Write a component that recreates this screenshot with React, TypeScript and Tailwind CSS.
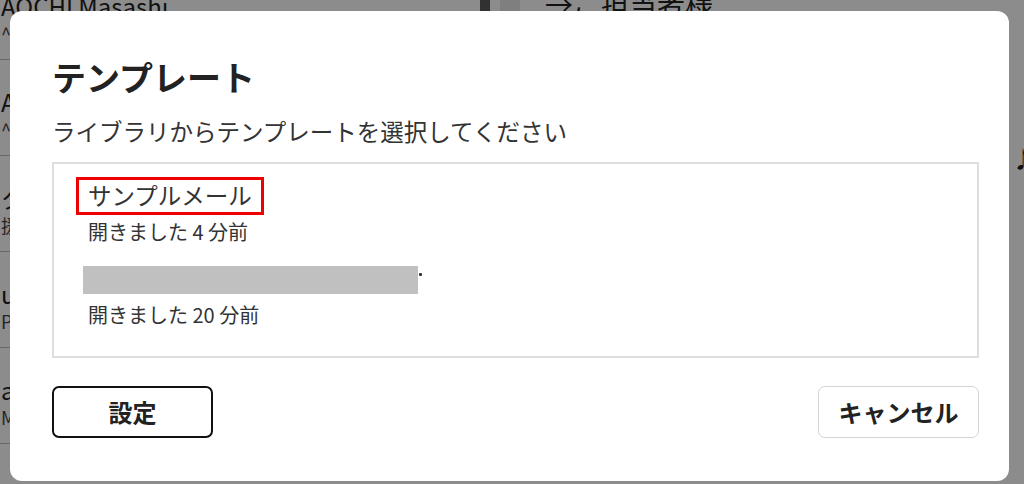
import React from 'react';

type Row = { name: string; sub: string };

const ROWS: Row[] = [
  { name: 'AOCHI Masashi', sub: '^' },
  { name: 'A', sub: '^' },
  { name: 'タ', sub: '援' },
  { name: 'ul', sub: 'Pa' },
  { name: 'a:', sub: 'M' },
  { name: '-Support', sub: '' },
];

type Item = { title: string; opened: string; hidden?: boolean };

const ITEMS: Item[] = [
  { title: 'サンプルメール', opened: '開きました 4 分前' },
  { title: '', opened: '開きました 20 分前', hidden: true },
];

const font = { fontFamily: '"Noto Sans CJK JP", "Noto Sans", sans-serif' };

const App: React.FC = () => {
  return (
    <div className="relative w-[1024px] h-[484px] overflow-hidden bg-white" style={font}>
      {/* page behind the dialog */}
      <div className="absolute inset-0 flex text-[#222]">
        <div className="w-[480px] shrink-0 flex flex-col -mt-[36px]">
          {ROWS.map((r, i) => (
            <div
              key={i}
              className="h-[96px] shrink-0 border-b border-[#bdbdbd] flex flex-col justify-end pb-[14px] pl-[1px]"
            >
              <div className={(i === 0 ? 'w-[170px]' : 'w-[10px]') + ' overflow-hidden text-[24px] leading-[30px] whitespace-nowrap'}>
                {r.name}
              </div>
              <div className="w-[10px] overflow-hidden text-[18px] leading-[24px] text-[#444] whitespace-nowrap">
                {r.sub}
              </div>
            </div>
          ))}
        </div>
        <div className="w-[10px] bg-[#5a5a5a] h-[40px]" />
        <div className="w-[10px]" />
        <div className="w-[20px] bg-[#e8e8e8] h-[40px]" />
        <div className="flex-1 pl-[25px] -mt-[14px] flex flex-col">
          <div className="text-[28px] leading-[36px]">→ご担当者様</div>
          <div className="mt-[120px] self-end w-[12px] overflow-hidden text-[22px] leading-[30px]">
            ♪
          </div>
        </div>
      </div>
      <div className="absolute inset-0 bg-black/45" />

      {/* dialog */}
      <div className="absolute left-[10px] top-[11px] w-[999px] h-[470px] bg-white rounded-[12px] pl-[42px] pr-[30px] pt-[46px] flex flex-col">
        <h1 className="text-[34px] leading-[40px] font-bold text-[#222]">テンプレート</h1>
        <p className="mt-[16px] text-[23.5px] leading-[36px] text-[#333]">
          ライブラリからテンプレートを選択してください
        </p>

        <div className="mt-[13px] h-[196px] border-2 border-[#dedede] pt-[13px] pl-[22px] flex flex-col">
          {ITEMS.map((it, i) =>
            it.hidden ? (
              <div key={i} className="mt-[21px] flex flex-col">
                <div className="flex items-start ml-[7px]">
                  <div className="w-[335px] h-[28px] bg-[#c0c0c0]" />
                  <div className="mt-[7px] ml-[1px] w-[3px] h-[3px] bg-[#333] rounded-[1px]" />
                </div>
                <div className="mt-[8px] pl-[12px] text-[20px] leading-[26px] text-[#333]">{it.opened}</div>
              </div>
            ) : (
              <div key={i} className="flex flex-col">
                <div className="w-[188px] h-[38px] border-[3px] border-[#ee0000] pl-[9px] flex items-center text-[23.5px] leading-none text-[#333]">
                  {it.title}
                </div>
                <div className="mt-[4px] pl-[12px] text-[20px] leading-[26px] text-[#333]">{it.opened}</div>
              </div>
            )
          )}
        </div>

        <div className="mt-[28px] flex justify-between">
          <button className="w-[161px] h-[52px] border-2 border-[#111] rounded-[7px] bg-white text-[24px] font-bold text-[#222]">
            設定
          </button>
          <button className="w-[161px] h-[52px] border border-[#d4d4d4] rounded-[7px] bg-white text-[24px] font-bold text-[#222]">
            キャンセル
          </button>
        </div>
      </div>
    </div>
  );
};

export default App;
